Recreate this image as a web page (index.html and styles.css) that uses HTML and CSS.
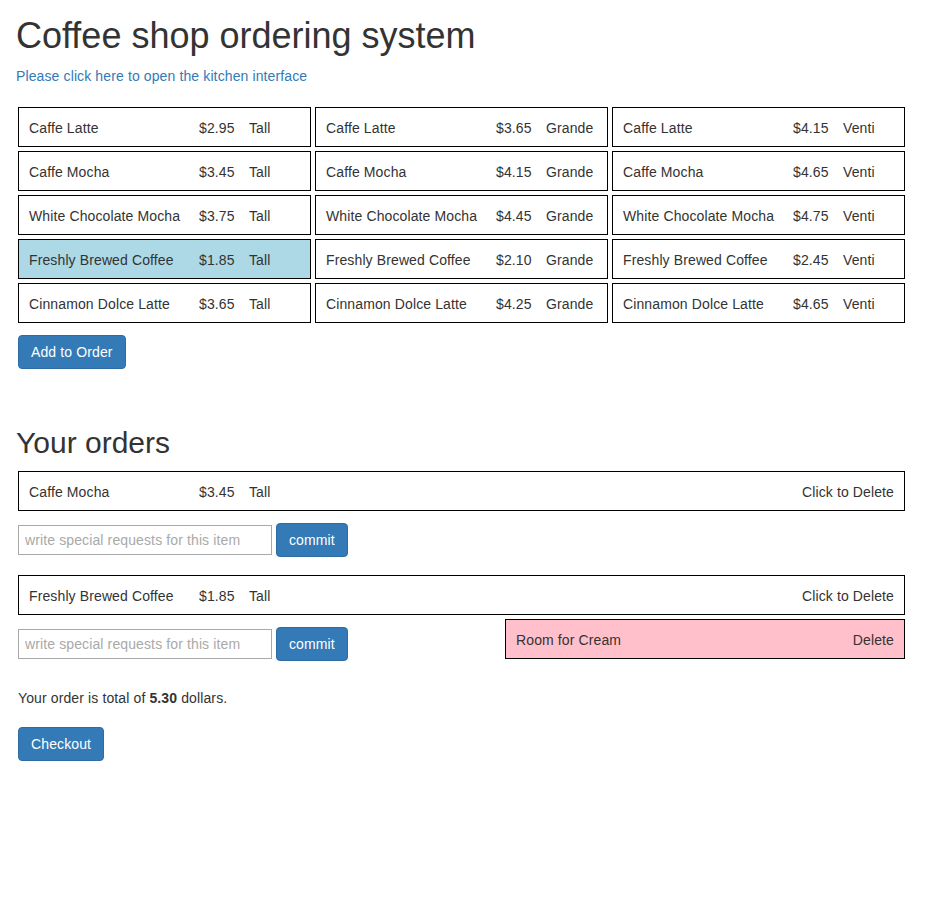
FILE: index.html
```html
<!DOCTYPE html>
<html lang="en">
<head>
<meta charset="utf-8">
<title>Coffee shop ordering system</title>
<link rel="stylesheet" href="styles.css">
</head>
<body>
<main class="page">
  <h1 class="title">Coffee shop ordering system</h1>
  <p class="intro"><a class="link" href="#">Please click here to open the kitchen interface</a></p>

  <div class="menu">
    <div class="item"><span class="name">Caffe Latte</span><span class="price">$2.95</span><span class="size">Tall</span></div>
    <div class="item"><span class="name">Caffe Latte</span><span class="price">$3.65</span><span class="size">Grande</span></div>
    <div class="item"><span class="name">Caffe Latte</span><span class="price">$4.15</span><span class="size">Venti</span></div>

    <div class="item"><span class="name">Caffe Mocha</span><span class="price">$3.45</span><span class="size">Tall</span></div>
    <div class="item"><span class="name">Caffe Mocha</span><span class="price">$4.15</span><span class="size">Grande</span></div>
    <div class="item"><span class="name">Caffe Mocha</span><span class="price">$4.65</span><span class="size">Venti</span></div>

    <div class="item"><span class="name">White Chocolate Mocha</span><span class="price">$3.75</span><span class="size">Tall</span></div>
    <div class="item"><span class="name">White Chocolate Mocha</span><span class="price">$4.45</span><span class="size">Grande</span></div>
    <div class="item"><span class="name">White Chocolate Mocha</span><span class="price">$4.75</span><span class="size">Venti</span></div>

    <div class="item selected"><span class="name">Freshly Brewed Coffee</span><span class="price">$1.85</span><span class="size">Tall</span></div>
    <div class="item"><span class="name">Freshly Brewed Coffee</span><span class="price">$2.10</span><span class="size">Grande</span></div>
    <div class="item"><span class="name">Freshly Brewed Coffee</span><span class="price">$2.45</span><span class="size">Venti</span></div>

    <div class="item"><span class="name">Cinnamon Dolce Latte</span><span class="price">$3.65</span><span class="size">Tall</span></div>
    <div class="item"><span class="name">Cinnamon Dolce Latte</span><span class="price">$4.25</span><span class="size">Grande</span></div>
    <div class="item"><span class="name">Cinnamon Dolce Latte</span><span class="price">$4.65</span><span class="size">Venti</span></div>
  </div>

  <button class="btn add-btn" type="button">Add to Order</button>

  <h2 class="subtitle">Your orders</h2>

  <div class="orders">
    <div class="order">
      <div class="item order-row"><span class="name">Caffe Mocha</span><span class="price">$3.45</span><span class="size">Tall</span><span class="delete">Click to Delete</span></div>
      <div class="order-below">
        <form class="request-form">
          <input class="request-input" type="text" placeholder="write special requests for this item">
          <button class="btn" type="button">commit</button>
        </form>
      </div>
    </div>

    <div class="order">
      <div class="item order-row"><span class="name">Freshly Brewed Coffee</span><span class="price">$1.85</span><span class="size">Tall</span><span class="delete">Click to Delete</span></div>
      <div class="order-below">
        <form class="request-form">
          <input class="request-input" type="text" placeholder="write special requests for this item">
          <button class="btn" type="button">commit</button>
        </form>
        <div class="requests">
          <div class="request"><span>Room for Cream</span><span>Delete</span></div>
        </div>
      </div>
    </div>
  </div>

  <p class="total">Your order is total of <b>5.30</b> dollars.</p>

  <button class="btn checkout-btn" type="button">Checkout</button>
</main>
</body>
</html>
```

FILE: styles.css
```css
* {
  box-sizing: border-box;
}

html, body {
  margin: 0;
  padding: 0;
  background: #fff;
}

body {
  font-family: "Liberation Sans", Arial, Helvetica, sans-serif;
  font-size: 14px;
  line-height: 20px;
  letter-spacing: 0.12px;
  color: #333;
}

.page {
  width: 907px;
  padding: 0 0 0 16px;
}

.title {
  font-size: 36px;
  font-weight: 500;
  line-height: 1.1;
  letter-spacing: 0;
  margin: 16px 0 10px;
  color: #333;
}

.intro {
  margin: 0 0 19px;
}

.link {
  color: #337ab7;
  text-decoration: none;
}

.menu {
  display: grid;
  grid-template-columns: repeat(3, 293px);
  column-gap: 4px;
  row-gap: 4px;
  padding: 2px;
}

.item {
  display: flex;
  align-items: center;
  height: 40px;
  padding: 10px 10px 8px;
  border: 1px solid #000;
  background: #fff;
  white-space: nowrap;
}

.item.selected {
  background: #add8e6;
}

.name {
  width: 170px;
  flex: none;
}

.price {
  width: 50px;
  flex: none;
}

.size {
  flex: none;
}

.delete {
  margin-left: auto;
}

.btn {
  display: inline-block;
  font-family: inherit;
  font-size: 14px;
  line-height: 20px;
  letter-spacing: 0.12px;
  padding: 6px 12px;
  height: 34px;
  color: #fff;
  background: #337ab7;
  border: 1px solid #2e6da4;
  border-radius: 4px;
  cursor: pointer;
}

.add-btn {
  margin: 10px 0 0 2px;
}

.subtitle {
  font-size: 30px;
  font-weight: 500;
  line-height: 1.1;
  letter-spacing: 0;
  margin: 57px 0 10px;
  color: #333;
}

.orders {
  display: flex;
  flex-direction: column;
  padding: 2px;
}

.order {
  margin-bottom: 18px;
}

.order-below {
  display: flex;
  justify-content: space-between;
  align-items: flex-start;
}

.request-form {
  display: flex;
  align-items: center;
  gap: 4px;
  margin-top: 12px;
}

.request-input {
  width: 254px;
  height: 30px;
  padding: 4px 6px;
  border: 1px solid #a9a9a9;
  font-family: inherit;
  font-size: 14px;
  letter-spacing: 0.12px;
  color: #333;
  outline: none;
}

.request-input::placeholder {
  color: #a9a9a9;
}

.requests {
  margin-top: 4px;
  width: 400px;
}

.request {
  display: flex;
  justify-content: space-between;
  height: 40px;
  padding: 10px 10px 8px;
  border: 1px solid #000;
  background: #ffc0cb;
}

.total {
  margin: 7px 0 19px 2px;
}

.checkout-btn {
  margin-left: 2px;
}
```
